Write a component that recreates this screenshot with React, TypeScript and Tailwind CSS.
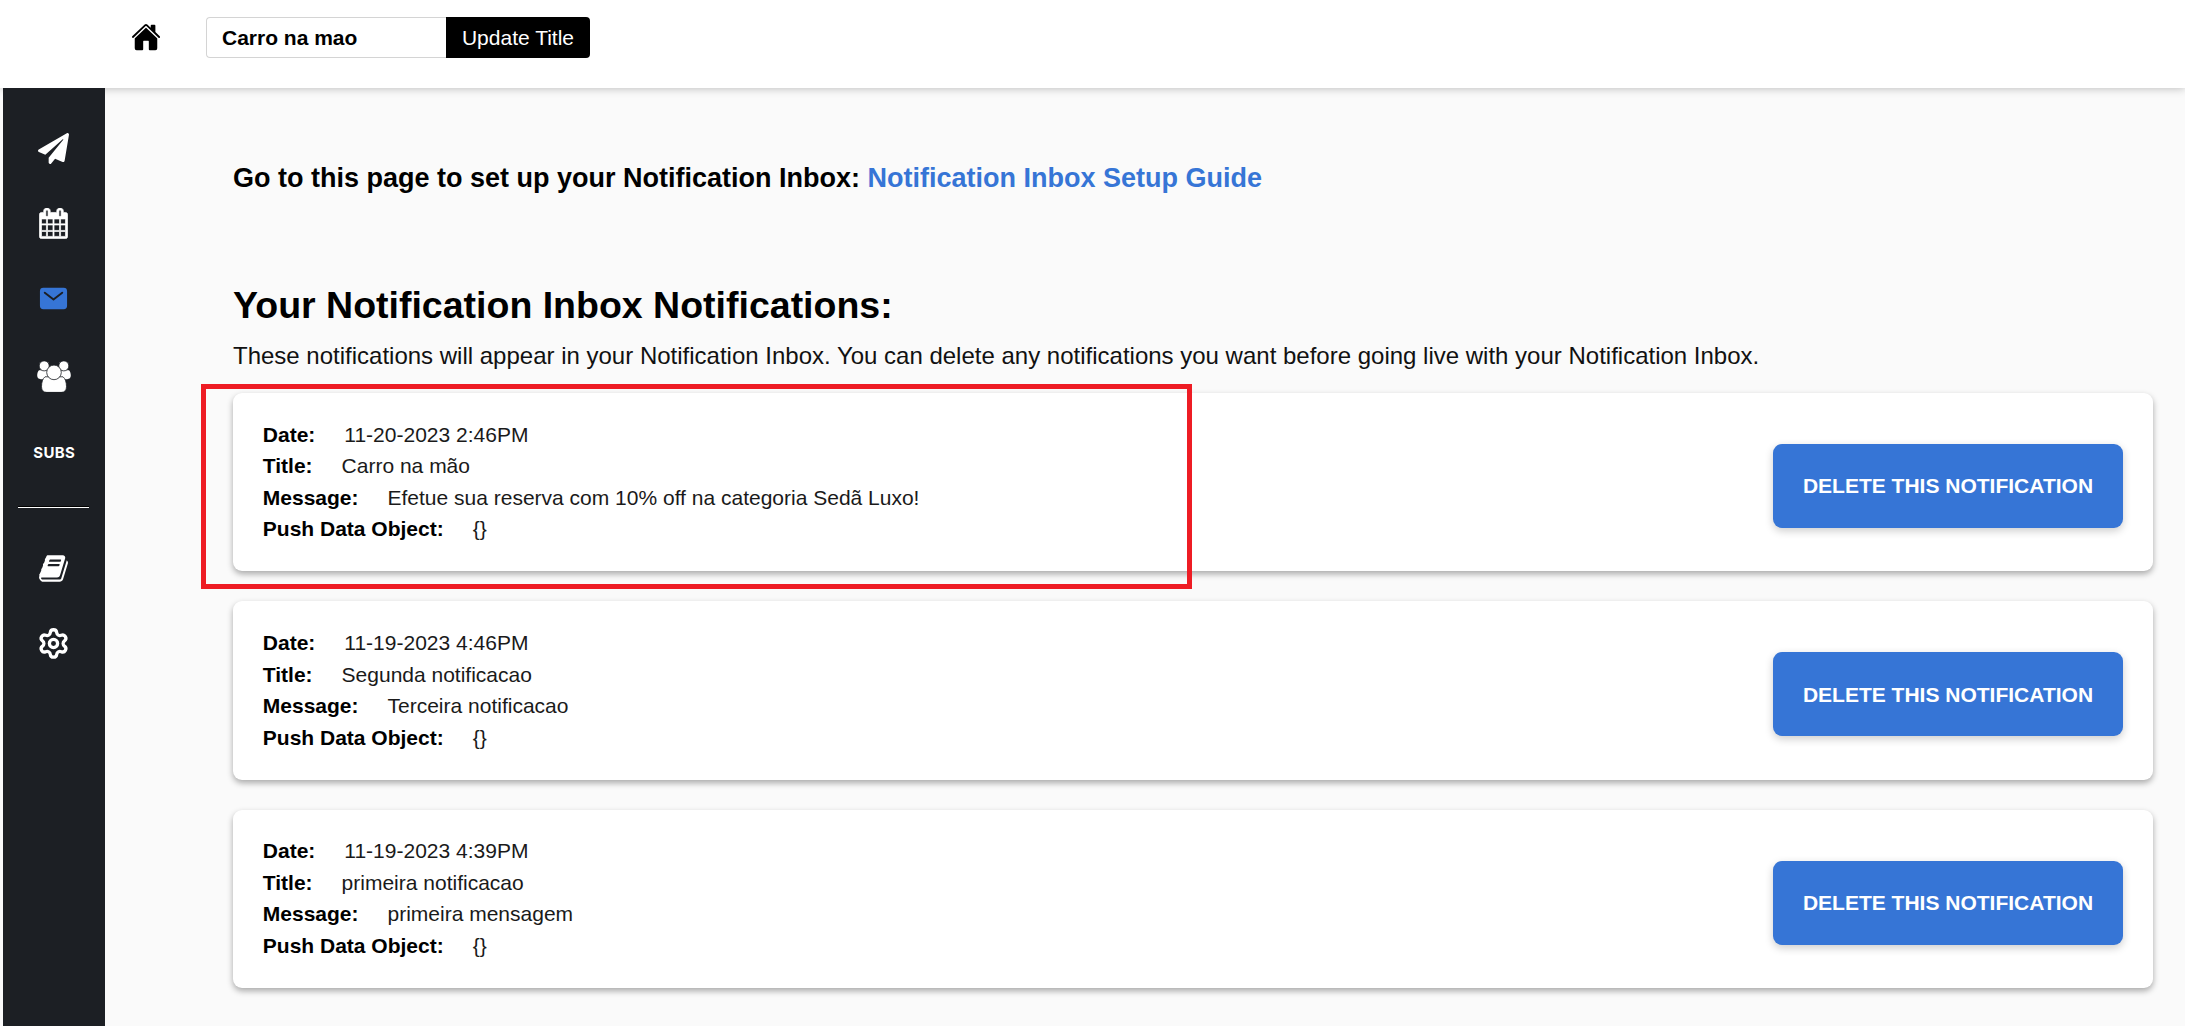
import React from 'react';
import { IoHome, IoMail } from 'react-icons/io5';
import { FaPaperPlane } from 'react-icons/fa';
import { Settings } from 'lucide-react';

const CALENDAR =
  'M192 1664h288v-288h-288v288zm352 0h320v-288h-320v288zm-352-352h288v-320h-288v320zm352 0h320v-320h-320v320zm-352-384h288v-288h-288v288zm736 736h320v-288h-320v288zm-384-736h320v-288h-320v288zm768 736h288v-288h-288v288zm-384-352h320v-320h-320v320zm-352-864v-288q0-13-9.5-22.5t-22.5-9.5h-64q-13 0-22.5 9.5t-9.5 22.5v288q0 13 9.5 22.5t22.5 9.5h64q13 0 22.5-9.5t9.5-22.5zm736 864h288v-320h-288v320zm-384-384h320v-288h-320v288zm384 0h288v-288h-288v288zm32-480v-288q0-13-9.5-22.5t-22.5-9.5h-64q-13 0-22.5 9.5t-9.5 22.5v288q0 13 9.5 22.5t22.5 9.5h64q13 0 22.5-9.5t9.5-22.5zm384-64v1280q0 52-38 90t-90 38h-1408q-52 0-90-38t-38-90v-1280q0-52 38-90t90-38h128v-96q0-66 47-113t113-47h64q66 0 113 47t47 113v96h384v-96q0-66 47-113t113-47h64q66 0 113 47t47 113v96h128q52 0 90 38t38 90z';
const BOOK =
  'M1703 478q40 57 18 129l-275 906q-19 64-76.5 107.5t-122.5 43.5h-923q-77 0-148.5-53.5t-99.5-131.5q-24-67-2-127 0-4 3-27t4-37q1-8-3-21.5t-3-19.5q2-11 8-21t16.5-23.5 16.5-23.5q23-38 45-91.5t30-91.5q3-10 .5-30t-.5-28q3-11 17-28t17-23q21-36 42-92t25-90q1-9-2.5-32t.5-28q4-13 22-30.5t22-22.5q19-26 42.5-84.5t27.5-96.5q1-8-3-25.5t-2-26.5q2-8 9-18t18-23 17-21q8-12 16.5-30.5t15-35 16-36 19.5-32 26.5-23.5 36-11.5 47.5 5.5l-1 3q38-9 51-9h761q74 0 114 56t18 130l-274 906q-36 119-71.5 153.5t-128.5 34.5h-869q-27 0-38 15-11 16-1 43 24 70 144 70h923q29 0 56-15.5t35-41.5l300-987q7-22 5-57 38 15 59 43zm-1064 2q-4 13 2 22.5t20 9.5h608q13 0 25.5-9.5t16.5-22.5l21-64q4-13-2-22.5t-20-9.5h-608q-13 0-25.5 9.5t-16.5 22.5zm-83 256q-4 13 2 22.5t20 9.5h608q13 0 25.5-9.5t16.5-22.5l21-64q4-13-2-22.5t-20-9.5h-608q-13 0-25.5 9.5t-16.5 22.5z';

function UsersIcon() {
  return (
    <svg viewBox="0 0 34 31" className="h-[31px] w-[34px]" fill="#fff">
      <path d="M2 9.200H11v9H3.800C1.500 18.200.2 16.800.2 14.600c0-2.200.6-4.200 1.800-5.400z" />
      <path d="M32 9.200H23v9h7.200c2.300 0 3.600-1.400 3.600-3.600 0-2.200-.6-4.200-1.800-5.400z" />
      <g stroke="#1c1f24" strokeWidth="0.8">
        <circle cx="7.200" cy="4.900" r="5" />
        <circle cx="26.800" cy="4.900" r="5" />
        <path d="M8 15.800h18c2.300 1.700 3.500 5.600 3.500 9.900 0 3.700-2 5.700-5.300 5.700H9.800c-3.300 0-5.300-2-5.300-5.700 0-4.300 1.200-8.200 3.500-9.900z" />
        <circle cx="17" cy="11.400" r="7.300" />
      </g>
    </svg>
  );
}

function Slot({ h, children }: { h: string; children: React.ReactNode }) {
  return <div className={`flex w-full shrink-0 items-center justify-center ${h}`}>{children}</div>;
}

type Item = { date: string; title: string; message: string };
const items: Item[] = [
  { date: '11-20-2023 2:46PM', title: 'Carro na mão', message: 'Efetue sua reserva com 10% off na categoria Sedã Luxo!' },
  { date: '11-19-2023 4:46PM', title: 'Segunda notificacao', message: 'Terceira notificacao' },
  { date: '11-19-2023 4:39PM', title: 'primeira notificacao', message: 'primeira mensagem' },
];

function Field({ label, value }: { label: string; value: string }) {
  return (
    <div className="flex gap-[29px] whitespace-nowrap">
      <b>{label}</b>
      <span className="text-[#1a1a1a]">{value}</span>
    </div>
  );
}

function Card({ item, marked }: { item: Item; marked: boolean }) {
  return (
    <div className="relative flex h-[178.3px] justify-between rounded-[9px] bg-white pr-[30px] pl-[29.8px] shadow-[0_3px_6px_rgba(0,0,0,0.33)]">
      <div className="pt-[25.7px] text-[21px] leading-[31.5px]">
        <Field label="Date:" value={item.date} />
        <Field label="Title:" value={item.title} />
        <Field label="Message:" value={item.message} />
        <Field label="Push Data Object:" value="{}" />
      </div>
      <button className="mt-[50.9px] h-[84px] w-[350px] rounded-[9px] bg-[#3675d6] text-[21px] font-bold whitespace-nowrap text-white shadow-[0_3px_8px_rgba(0,0,0,0.2)]">
        DELETE THIS NOTIFICATION
      </button>
      {marked && <div className="absolute -top-[9px] -left-8 h-[205px] w-[991px] border-[5px] border-[#ee1c24]" />}
    </div>
  );
}

export default function App() {
  return (
    <div className="flex h-[1026px] w-[2185px] flex-col overflow-hidden bg-[#fafafa] font-['Liberation_Sans',Arial,sans-serif] text-black">
      <header className="flex h-[88px] shrink-0 items-start bg-white pl-[131px] shadow-[0_0_9px_rgba(0,0,0,0.28)]">
        <IoHome className="mt-[22px] size-[30px]" />
        <div className="mt-[17px] ml-[45px] flex h-[41px] text-[21px]">
          <div className="flex w-[240px] items-center rounded-l-[4px] border border-r-0 border-[#d4d4d4] pl-[15px] font-bold">Carro na mao</div>
          <button className="w-[144px] rounded-r-[4px] bg-black text-white">Update Title</button>
        </div>
      </header>
      <div className="flex min-h-0 flex-1">
        <nav className="relative ml-[3px] flex w-[102px] shrink-0 flex-col items-center bg-[#1c1f24] pt-[23px] pr-px text-white">
          <Slot h="h-[75px]"><FaPaperPlane className="size-[31px]" /></Slot>
          <Slot h="h-[75px]">
            <svg viewBox="44 0 1704 1812" className="h-[31px] w-[29px]" fill="currentColor" stroke="currentColor" strokeWidth="40"><path d={CALENDAR} /></svg>
          </Slot>
          <Slot h="h-[75px]"><IoMail className="size-[31px] text-[#3675d6]" /></Slot>
          <Slot h="h-[80px]"><UsersIcon /></Slot>
          <Slot h="h-[74px]">
            <span className="pl-[1.5px] font-['Inter',sans-serif] text-[15px] font-bold tracking-[0.4px]">SUBS</span>
          </Slot>
          <div className="mt-4 h-0.5 w-[71px] shrink-0 border-t border-b border-t-black border-b-white" />
          <Slot h="h-[120px]">
            <svg viewBox="60 128 1670 1536" className="h-[27px] w-[29px]" fill="currentColor"><path d={BOOK} /></svg>
          </Slot>
          <Slot h="h-[30px]"><Settings size={33} strokeWidth={2.4} /></Slot>
        </nav>
        <main className="flex-1 pt-[74.5px] pr-8 pl-32">
          <h2 className="text-[27px] leading-[30px] font-bold">
            Go to this page to set up your Notification Inbox: <a className="text-[#3675d6]">Notification Inbox Setup Guide</a>
          </h2>
          <h1 className="mt-[91.5px] text-[37.5px] leading-[42px] font-bold">Your Notification Inbox Notifications:</h1>
          <p className="mt-4 text-[24px] leading-7 text-[#111]">
            These notifications will appear in your Notification Inbox. You can delete any notifications you want before going live with your Notification Inbox.
          </p>
          <div className="mt-[23px] flex flex-col gap-[30.1px]">
            {items.map((it, i) => (
              <Card key={it.date} item={it} marked={i === 0} />
            ))}
          </div>
        </main>
      </div>
    </div>
  );
}
